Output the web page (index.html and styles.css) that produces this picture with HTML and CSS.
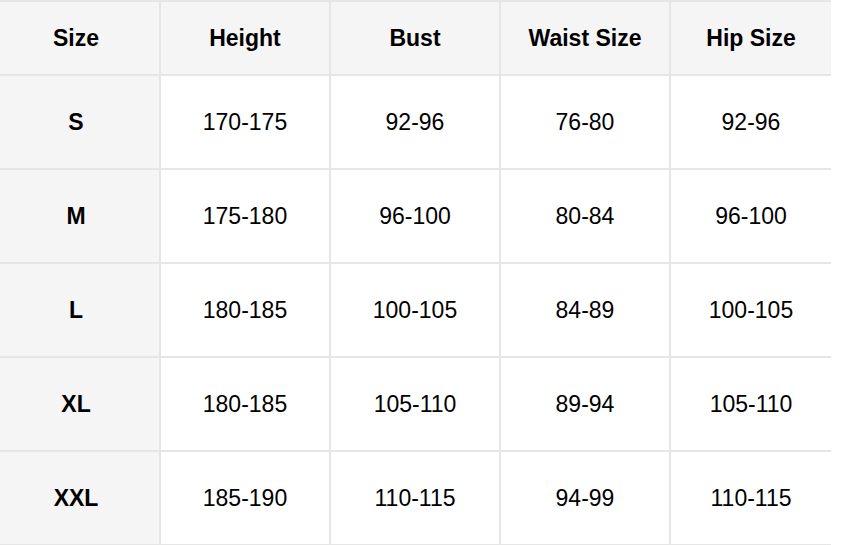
FILE: index.html
```html
<!DOCTYPE html>
<html>
<head>
<meta charset="utf-8">
<link rel="stylesheet" href="styles.css">
</head>
<body>
<table class="size-table">
  <colgroup>
    <col class="c1"><col class="c2"><col class="c3"><col class="c4"><col class="c5">
  </colgroup>
  <thead>
    <tr><th>Size</th><th>Height</th><th>Bust</th><th>Waist Size</th><th>Hip Size</th></tr>
  </thead>
  <tbody>
    <tr><th>S</th><td>170-175</td><td>92-96</td><td>76-80</td><td>92-96</td></tr>
    <tr><th>M</th><td>175-180</td><td>96-100</td><td>80-84</td><td>96-100</td></tr>
    <tr><th>L</th><td>180-185</td><td>100-105</td><td>84-89</td><td>100-105</td></tr>
    <tr><th>XL</th><td>180-185</td><td>105-110</td><td>89-94</td><td>105-110</td></tr>
    <tr><th>XXL</th><td>185-190</td><td>110-115</td><td>94-99</td><td>110-115</td></tr>
  </tbody>
</table>
</body>
</html>
```
FILE: styles.css
```css
html, body {
  margin: 0;
  padding: 0;
  background: #ffffff;
}
.size-table {
  border-collapse: separate;
  border-spacing: 0;
  table-layout: fixed;
  width: 831px;
  border-top: 2px solid #e6e6e6;
  font-family: "Liberation Sans", Arial, sans-serif;
  font-size: 23px;
  color: #000;
}
.c1 { width: 161px; }
.c2, .c3, .c4 { width: 170px; }
.c5 { width: 160px; }
.size-table th,
.size-table td {
  padding: 0;
  text-align: center;
  vertical-align: middle;
  border-right: 2px solid #e6e6e6;
  border-bottom: 2px solid #e6e6e6;
  box-sizing: border-box;
}
.size-table th:first-child {
  padding-right: 7px;
}
.size-table th:last-child,
.size-table td:last-child {
  border-right: none;
}
.size-table thead th {
  height: 74px;
  background: #f5f5f5;
  font-weight: bold;
}
.size-table tbody tr {
  height: 94px;
}
.size-table tbody th {
  background: #f5f5f5;
  font-weight: bold;
}
.size-table tbody td {
  background: #ffffff;
  font-weight: normal;
}
```
